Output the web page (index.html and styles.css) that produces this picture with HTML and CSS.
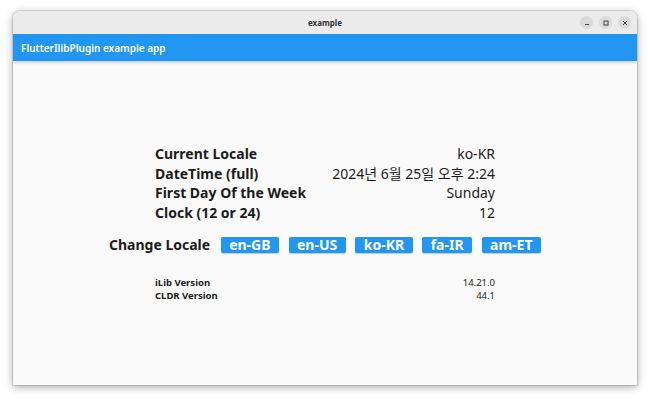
FILE: index.html
```html
<!DOCTYPE html>
<html lang="en">
<head>
    <meta charset="UTF-8">
    <meta name="viewport" content="width=device-width, initial-scale=1.0">
    <title>example</title>
    <link rel="stylesheet" href="styles.css">
</head>
<body>

<div class="window">
    <div class="title-bar">
        <span class="title">example</span>
        <div class="window-buttons">
            <span class="win-btn">
                <svg width="8" height="8" viewBox="0 0 8 8"><path d="M2 5.5h4" stroke="#444" stroke-width="1"/></svg>
            </span>
            <span class="win-btn">
                <svg width="8" height="8" viewBox="0 0 8 8"><rect x="2" y="2" width="4" height="4" fill="none" stroke="#444" stroke-width="1"/></svg>
            </span>
            <span class="win-btn">
                <svg width="8" height="8" viewBox="0 0 8 8"><path d="M2 2l4 4M6 2l-4 4" stroke="#444" stroke-width="1"/></svg>
            </span>
        </div>
    </div>

    <div class="app-bar">FlutterIlibPlugin example app</div>

    <div class="content">
        <div class="info-table">
            <div class="label">Current Locale</div>
            <div class="value">ko-KR</div>
            <div class="label">DateTime (full)</div>
            <div class="value">2024년 6월 25일 오후 2:24</div>
            <div class="label">First Day Of the Week</div>
            <div class="value">Sunday</div>
            <div class="label">Clock (12 or 24)</div>
            <div class="value">12</div>
        </div>

        <div class="locale-row">
            <span class="locale-label">Change Locale</span>
            <button class="locale-btn">en-GB</button>
            <button class="locale-btn">en-US</button>
            <button class="locale-btn">ko-KR</button>
            <button class="locale-btn">fa-IR</button>
            <button class="locale-btn">am-ET</button>
        </div>

        <div class="version-table">
            <div class="label">iLib Version</div>
            <div class="value">14.21.0</div>
            <div class="label">CLDR Version</div>
            <div class="value">44.1</div>
        </div>
    </div>
</div>

</body>
</html>
```

FILE: styles.css
```css
body {
    margin: 0;
    padding: 11px 13px 14px 13px;
    height: 399px;
    box-sizing: border-box;
    background-color: #ffffff;
    font-family: "Noto Sans", "Noto Sans CJK KR", sans-serif;
    overflow: hidden;
}

.window {
    height: 374px;
    display: flex;
    flex-direction: column;
    background-color: #fafafa;
    border-radius: 7px 7px 0 0;
    box-shadow: 0 2px 8px rgba(0, 0, 0, 0.35), 0 0 0 1px rgba(0, 0, 0, 0.12);
    overflow: hidden;
}

.title-bar {
    height: 23px;
    flex-shrink: 0;
    display: flex;
    align-items: center;
    justify-content: center;
    position: relative;
    background-color: #ebebeb;
}

.title {
    font-size: 8px;
    font-weight: bold;
    color: #333;
}

.window-buttons {
    position: absolute;
    right: 6px;
    top: 5px;
    display: flex;
    gap: 6px;
}

.win-btn {
    width: 13px;
    height: 13px;
    border-radius: 50%;
    background-color: #dadada;
    display: flex;
    align-items: center;
    justify-content: center;
}

.app-bar {
    height: 27px;
    flex-shrink: 0;
    display: flex;
    align-items: center;
    padding-left: 8px;
    background-color: #2196f3;
    color: white;
    font-size: 10px;
    font-weight: 600;
    box-shadow: 0 1px 3px rgba(0, 0, 0, 0.25);
}

.content {
    flex: 1;
    display: flex;
    flex-direction: column;
    justify-content: center;
    align-items: center;
}

.info-table {
    width: 340px;
    display: grid;
    grid-template-columns: auto auto;
    justify-content: space-between;
    font-size: 14px;
    line-height: 19.5px;
    color: #1c1c1c;
}

.info-table .label {
    font-weight: bold;
}

.info-table .value {
    text-align: right;
}

.locale-row {
    display: flex;
    align-items: center;
    gap: 9.5px;
    margin-top: 13px;
}

.locale-label {
    font-size: 14px;
    font-weight: bold;
    color: #1c1c1c;
    margin-right: 1px;
}

.locale-btn {
    height: 16px;
    padding: 0 8.5px;
    border: none;
    border-radius: 2px;
    background-color: #2196f3;
    color: white;
    font-family: inherit;
    font-size: 14px;
    font-weight: bold;
    line-height: 16px;
    box-shadow: 0 1px 1px rgba(0, 0, 0, 0.2);
}

.version-table {
    width: 340px;
    display: grid;
    grid-template-columns: auto auto;
    justify-content: space-between;
    margin-top: 22px;
    font-size: 9.5px;
    line-height: 13px;
    color: #1c1c1c;
}

.version-table .label {
    font-weight: bold;
}

.version-table .value {
    text-align: right;
}
```
